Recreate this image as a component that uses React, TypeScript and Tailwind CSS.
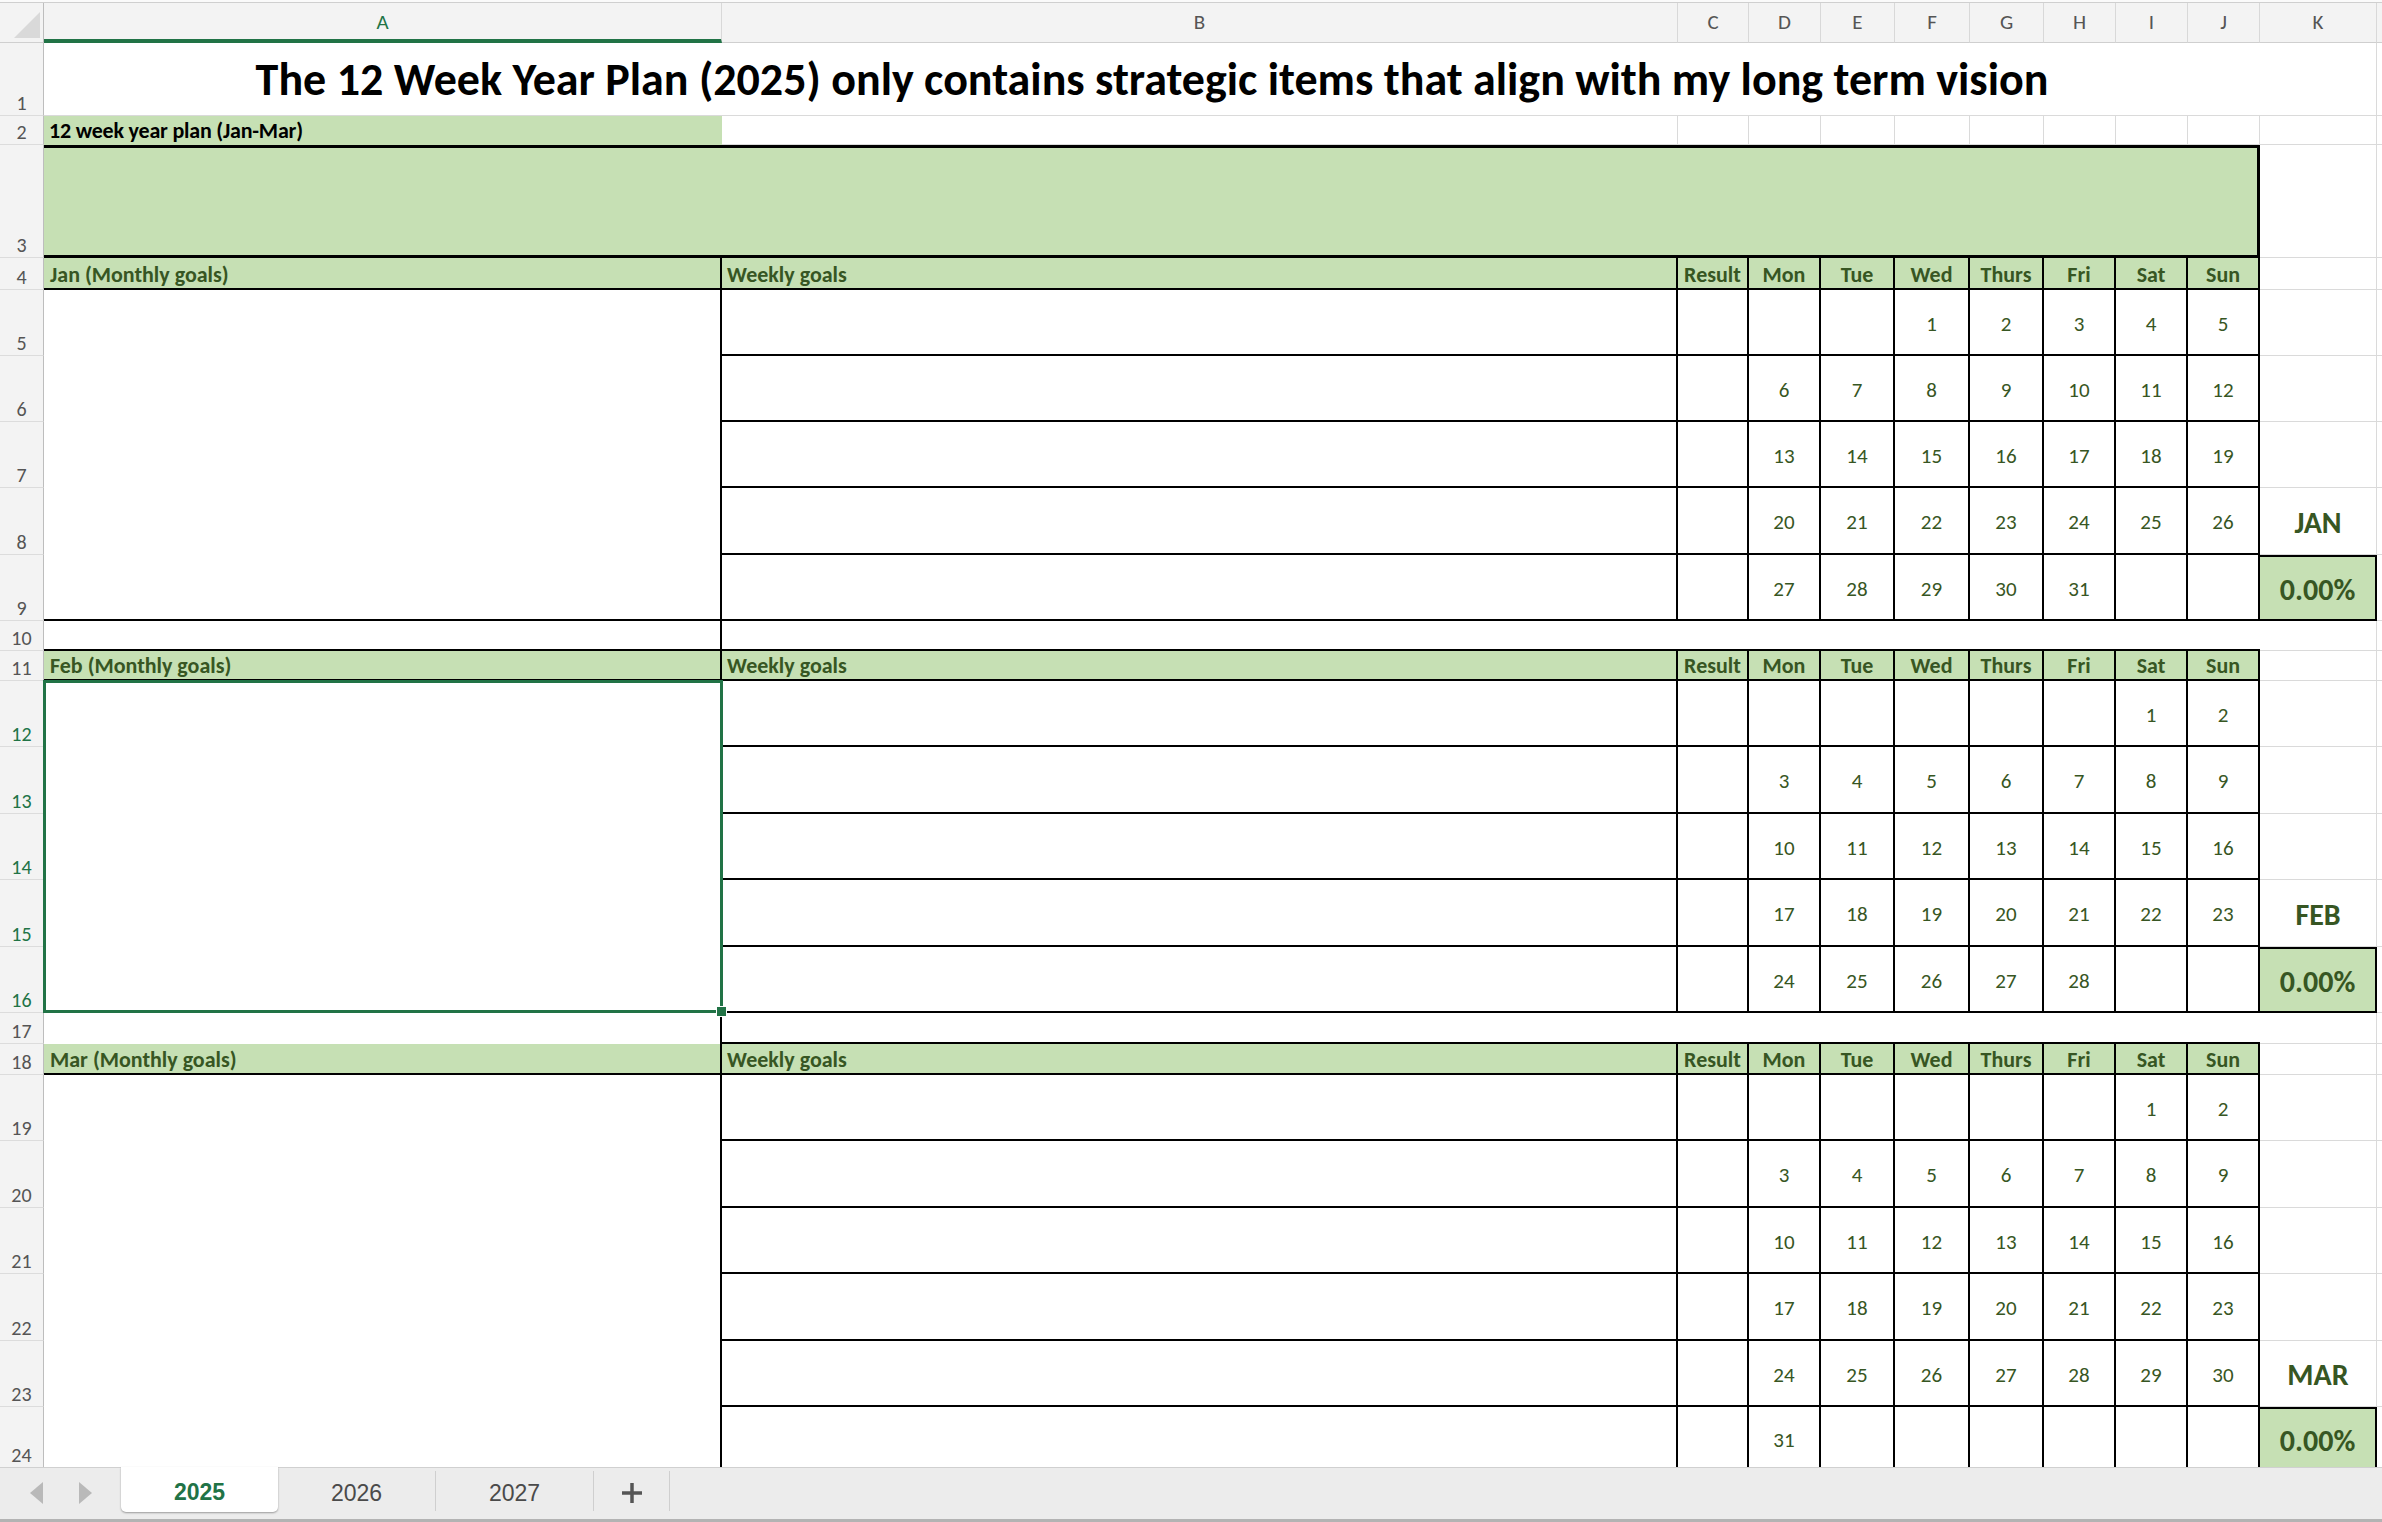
import { Fragment, ReactNode } from 'react';
import clsx from 'clsx';

type Month = { name: string; short: string; start: number; weeks: string[][] };

const DAYS = ['Mon', 'Tue', 'Wed', 'Thurs', 'Fri', 'Sat', 'Sun'];
const COLS = ['A', 'B', 'C', 'D', 'E', 'F', 'G', 'H', 'I', 'J', 'K'];

const range = (a: number, b: number) => Array.from({ length: b - a + 1 }, (_, i) => String(a + i));

const months: Month[] = [
   {
      name: 'Jan',
      short: 'JAN',
      start: 4,
      weeks: [['', '', '1', '2', '3', '4', '5'], range(6, 12), range(13, 19), range(20, 26), [...range(27, 31), '', '']],
   },
   {
      name: 'Feb',
      short: 'FEB',
      start: 11,
      weeks: [['', '', '', '', '', '1', '2'], range(3, 9), range(10, 16), range(17, 23), [...range(24, 28), '', '']],
   },
   {
      name: 'Mar',
      short: 'MAR',
      start: 18,
      weeks: [
         ['', '', '', '', '', '1', '2'],
         range(3, 9),
         range(10, 16),
         range(17, 23),
         range(24, 30),
         ['31', '', '', '', '', '', ''],
      ],
   },
];

const GRIDLINE = 'border-r border-b border-[#dadada]';
const BOX = 'border-r-2 border-b-2 border-black';
const HEAD =
   'flex items-end pb-[2px] bg-[#c6e0b4] border-r-2 border-b-2 border-black font-bold text-[22px] leading-none text-[#375623] whitespace-nowrap overflow-hidden';

const RowHead = ({ n, active = false, last = false }: { n: number; active?: boolean; last?: boolean }) => (
   <div
      className={clsx(
         'flex items-end justify-center bg-[#f3f3f3] border-r border-b border-r-[#bdbdbd] border-b-[#dcdcdc] text-[20px] leading-none',
         last ? 'pb-[5px]' : 'pb-[2px]',
         active ? 'text-[#217346]' : 'text-[#555]'
      )}>
      {n}
   </div>
);

const Blank = ({ className }: { className?: string }) => <div className={className} />;

const Cell = ({ className, children }: { className?: string; children?: ReactNode }) => (
   <div className={className}>{children}</div>
);

const MonthBlock = ({ m, selected = false }: { m: Month; selected?: boolean }) => {
   const n = m.weeks.length;
   return (
      <>
         <RowHead n={m.start} />
         <Cell className={clsx(HEAD, 'pl-[6px]')}>{m.name} (Monthly goals)</Cell>
         <Cell className={clsx(HEAD, 'pl-[5px]')}>Weekly goals</Cell>
         <Cell className={clsx(HEAD, 'justify-center')}>Result</Cell>
         {DAYS.map(d => (
            <Cell key={d} className={clsx(HEAD, 'justify-center')}>
               {d}
            </Cell>
         ))}
         <Blank className={GRIDLINE} />
         <Blank className="border-b border-[#dadada]" />
         {m.weeks.map((week, i) => (
            <Fragment key={i}>
               <RowHead n={m.start + 1 + i} active={selected} last={m.start + 1 + i === 24} />
               {i === 0 && (
                  <div className={clsx(BOX, 'relative', n === 6 ? 'row-span-6' : 'row-span-5')}>
                     {selected && (
                        <>
                           <div className="absolute -top-px -left-px -right-[3px] -bottom-[2px] border-[3px] border-[#217346]" />
                           <div className="absolute -right-[7px] -bottom-[6px] size-[11px] bg-[#217346] border-[1.5px] border-white" />
                        </>
                     )}
                  </div>
               )}
               <Blank className={BOX} />
               <Blank className={BOX} />
               {week.map((d, j) => (
                  <Cell key={j} className={clsx(BOX, 'flex items-center justify-center pt-[5px] text-[21px] text-[#375623]')}>
                     {d}
                  </Cell>
               ))}
               {i === n - 2 ? (
                  <Cell className={clsx(GRIDLINE, 'flex items-center justify-center pt-[2px] font-bold text-[30px] text-[#375623]')}>
                     {m.short}
                  </Cell>
               ) : i === n - 1 ? (
                  <Cell className="flex items-center justify-center border-t-2 border-r-2 border-b-2 border-black bg-[#c6e0b4] pt-[2px] font-bold text-[30px] text-[#375623]">
                     0.00%
                  </Cell>
               ) : (
                  <Blank className={GRIDLINE} />
               )}
               <Blank className="border-b border-[#dadada]" />
            </Fragment>
         ))}
      </>
   );
};

const Spacer = ({ n, closed }: { n: number; closed: boolean }) => (
   <>
      <RowHead n={n} />
      <Blank className={closed ? 'border-r-2 border-b-2 border-black' : 'border-r-2 border-black'} />
      <Blank className="col-span-9 border-b-2 border-black" />
      <Blank className={GRIDLINE} />
      <Blank className="border-b border-[#dadada]" />
   </>
);

const Tri = ({ dir }: { dir: 'left' | 'right' }) => (
   <svg width="14" height="22" viewBox="0 0 14 22">
      <path d={dir === 'left' ? 'M13 0 L13 22 L0 11 Z' : 'M1 0 L1 22 L14 11 Z'} fill="#b9b9b9" />
   </svg>
);

const App = () => {
   return (
      <div className="flex h-[1522px] w-full flex-col overflow-hidden bg-white font-[family-name:Carlito,Lato,sans-serif]">
         <div className="h-[3px] shrink-0 border-b border-[#cfcfcf] bg-[#fafafa]" />
         <div className="min-h-0 flex-1 overflow-hidden">
            <div className="grid grid-cols-[44px_678px_956px_71px_72px_74px_75px_74px_72px_72px_72px_117px_1fr] grid-rows-[40px_73px_29px_113px_32px_66px_66px_66px_67px_66px_30px_30px_66px_67px_66px_67px_66px_31px_31px_66px_67px_66px_67px_66px_64px]">
               {/* column headers */}
               <div className="relative border-r border-b border-r-[#bdbdbd] border-b-[#cfcfcf] bg-[#f3f3f3]">
                  <svg className="absolute left-[14px] top-[9px]" width="26" height="26" viewBox="0 0 26 26">
                     <path d="M26 0 L26 26 L0 26 Z" fill="#d9d9d9" />
                  </svg>
               </div>
               {COLS.map(c => (
                  <div
                     key={c}
                     className={clsx(
                        'flex items-center justify-center bg-[#f3f3f3] border-r border-r-[#d8d8d8] text-[21px] leading-none',
                        c === 'A'
                           ? 'border-b-4 border-b-[#217346] pt-[2px] text-[#217346]'
                           : 'border-b border-b-[#cfcfcf] text-[#555]'
                     )}>
                     {c}
                  </div>
               ))}
               <Blank className="border-b border-[#cfcfcf] bg-[#f3f3f3]" />

               {/* row 1 */}
               <RowHead n={1} />
               <Cell className="col-span-10 flex items-end justify-center border-b border-[#dadada] pb-[13px] text-[46px] leading-none font-bold whitespace-nowrap text-black">
                  The 12 Week Year Plan (2025) only contains strategic items that align with my long term vision
               </Cell>
               <Blank className={GRIDLINE} />
               <Blank className="border-b border-[#dadada]" />

               {/* row 2 */}
               <RowHead n={2} />
               <Cell className="flex items-end bg-[#c6e0b4] pb-[3px] pl-[5px] text-[22px] leading-none font-bold tracking-[-0.2px] whitespace-nowrap text-black">
                  12 week year plan (Jan-Mar)
               </Cell>
               {COLS.slice(1).map(c => (
                  <Blank key={c} className={GRIDLINE} />
               ))}
               <Blank className="border-b border-[#dadada]" />

               {/* row 3 */}
               <RowHead n={3} />
               <Blank className="col-span-10 border-t-[3px] border-r-[3px] border-b-[3px] border-black bg-[#c6e0b4]" />
               <Blank className={GRIDLINE} />
               <Blank className="border-b border-[#dadada]" />

               <MonthBlock m={months[0]} />
               <Spacer n={10} closed={true} />
               <MonthBlock m={months[1]} selected={true} />
               <Spacer n={17} closed={false} />
               <MonthBlock m={months[2]} />
            </div>
         </div>

         {/* sheet tabs */}
         <div className="flex h-[52px] shrink-0 items-start border-t border-[#d0d0d0] bg-[#ececec] font-[family-name:'Liberation_Sans',Arial,sans-serif] text-[23px] leading-none">
            <div className="flex h-full w-[121px] items-center gap-[34px] pl-[30px] pb-[2px]">
               <Tri dir="left" />
               <Tri dir="right" />
            </div>
            <div className="-mt-px flex h-[45px] w-[157px] items-center justify-center rounded-b-[5px] bg-white pt-[6px] font-bold text-[#217346] shadow-[0_1px_2px_rgba(0,0,0,0.35)]">
               2025
            </div>
            <div className="mt-[3px] flex h-[40px] w-[158px] items-center justify-center border-r border-[#cfcfcf] pt-[4px] text-[#4a4a4a]">
               2026
            </div>
            <div className="mt-[3px] flex h-[40px] w-[158px] items-center justify-center border-r border-[#cfcfcf] pt-[4px] text-[#4a4a4a]">
               2027
            </div>
            <div className="mt-[3px] flex h-[40px] w-[76px] items-center justify-center border-r border-[#cfcfcf] pt-[4px]">
               <svg width="22" height="22" viewBox="0 0 22 22">
                  <path d="M11 1 V21 M1 11 H21" stroke="#555" strokeWidth="3.5" />
               </svg>
            </div>
         </div>
         <div className="h-[3px] shrink-0 bg-[#b3b3b3]" />
      </div>
   );
};

export default App;
